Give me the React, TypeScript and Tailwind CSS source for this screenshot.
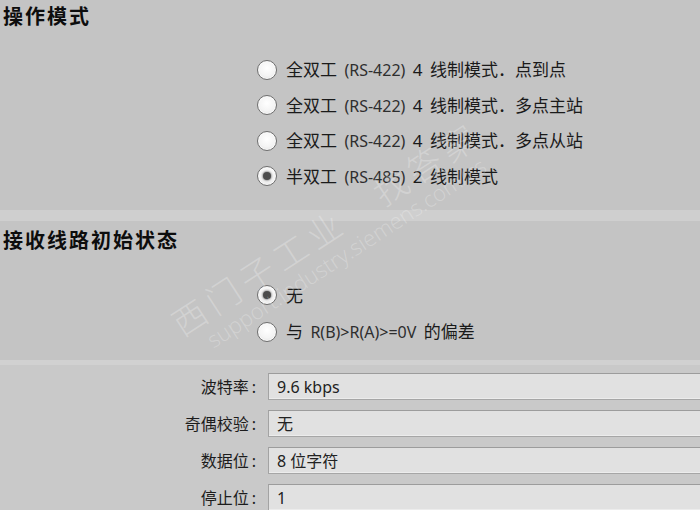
import React from 'react'

const cjk = "'Noto Sans', 'Noto Sans CJK SC', sans-serif"

const Radio = ({ checked }: { checked?: boolean }) => (
  <span className="relative flex h-[20px] w-[20px] shrink-0 items-center justify-center rounded-full border border-[#6f6f6f] bg-[radial-gradient(circle_at_50%_40%,#ffffff_0%,#f4f4f4_55%,#d9d9d9_100%)] shadow-[inset_0_0_0_1px_#fafafa]">
    {checked && <span className="h-[8px] w-[8px] rounded-full bg-[#4b4b4b] shadow-[0_0_2px_1px_#9a9a9a]" />}
  </span>
)

const RadioRow = ({ checked, children, h }: { checked?: boolean; children: React.ReactNode; h: string }) => (
  <div className={`flex items-center gap-[9px] ${h}`}>
    <Radio checked={checked} />
    <span className="text-[17px] leading-none text-[#1a1a1a] [word-spacing:3px]">{children}</span>
  </div>
)

const Rs = ({ t }: { t: string }) => <span className="text-[16px] text-[#2e2e2e]">{t}</span>

const fields = [
  { label: '波特率', value: '9.6 kbps' },
  { label: '奇偶校验', value: '无' },
  { label: '数据位', value: '8 位字符' },
  { label: '停止位', value: '1' },
]

export default function App() {
  return (
    <div className="relative h-[510px] w-[700px] overflow-hidden bg-[#c4c4c4]" style={{ fontFamily: cjk }}>
      {/* 操作模式 */}
      <section className="h-[210px] pt-[3px]">
        <h2 className="pl-[3px] text-[20px] font-bold leading-[28px] tracking-[2px] text-[#0d0d0d]">操作模式</h2>
        <div className="mt-[21px] pl-[257px]">
          <RadioRow h="h-[35.5px]">全双工 <Rs t="(RS-422)" /> 4 线制模式．点到点</RadioRow>
          <RadioRow h="h-[35.5px]">全双工 <Rs t="(RS-422)" /> 4 线制模式．多点主站</RadioRow>
          <RadioRow h="h-[35.5px]">全双工 <Rs t="(RS-422)" /> 4 线制模式．多点从站</RadioRow>
          <RadioRow h="h-[35.5px]" checked>半双工 <Rs t="(RS-485)" /> 2 线制模式</RadioRow>
        </div>
      </section>

      <div className="h-[11px] bg-[#cfcfcf]" />

      {/* 接收线路初始状态 */}
      <section className="h-[139px] pt-[6px]">
        <h2 className="pl-[3px] text-[20px] font-bold leading-[28px] tracking-[2px] text-[#0d0d0d]">接收线路初始状态</h2>
        <div className="mt-[22px] pl-[257px]">
          <RadioRow h="h-[36.5px]" checked>无</RadioRow>
          <RadioRow h="h-[36.5px]">与 <Rs t="R(B)>R(A)>=0V" /> 的偏差</RadioRow>
        </div>
      </section>

      <div className="h-[5px] bg-[#d1d1d1]" />

      {/* 参数 */}
      <section className="flex flex-col gap-[10px] bg-[#c9c9c9] pt-[8px]">
        {fields.map((f) => (
          <div key={f.label} className="flex items-center">
            <label className="w-[256px] text-right text-[16px] leading-none text-[#1c1c1c]">
              {f.label}<span className="ml-[3px]">:</span>
            </label>
            <div className="ml-[12px] flex h-[27px] flex-1 items-center border border-r-0 border-t-[#9c9c9c] border-b-[#a6a6a6] border-l-[#a3a3a3] bg-[#e1e1e1] pl-[8px] text-[16px] text-[#222] shadow-[inset_0_-1px_0_#ececec]">
              {f.value}
            </div>
          </div>
        ))}
      </section>

      {/* watermark */}
      <div className="pointer-events-none absolute left-[182px] top-[308px] origin-left -rotate-[33deg] select-none text-white/25">
        <div className="text-[34px] font-light leading-none tracking-[6px]">西门子工业　找答案</div>
        <div className="mt-[2px] pl-[20px] text-[22px] font-light leading-none" style={{ fontFamily: "'Open Sans', sans-serif" }}>support.industry.siemens.com/cs</div>
      </div>
    </div>
  )
}
